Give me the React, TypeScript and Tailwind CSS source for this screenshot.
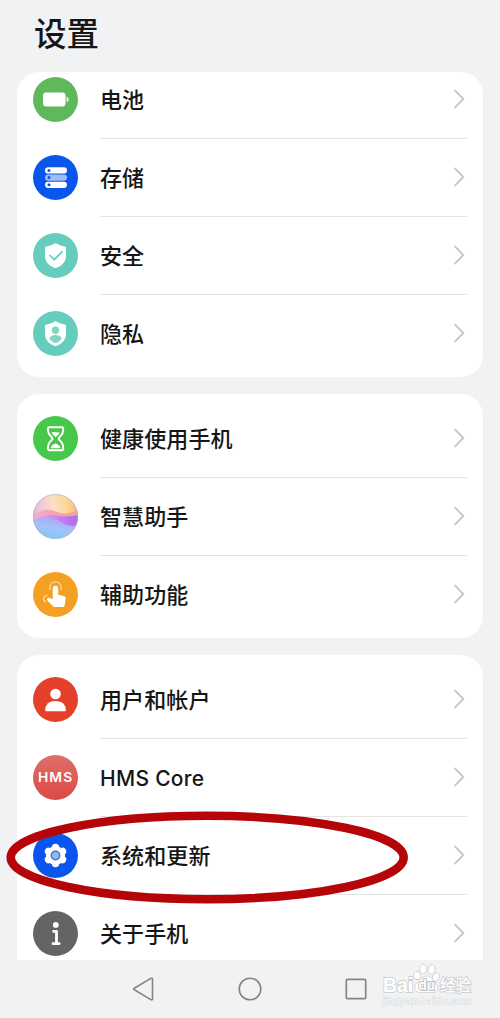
import React from "react";

interface RowProps {
  icon: React.ReactNode;
  label: string;
  latin?: boolean;
  last?: boolean;
}

const Disc = ({
  className,
  children,
}: {
  className: string;
  children?: React.ReactNode;
}) => (
  <div className={`w-[45px] h-[45px] shrink-0 rounded-full overflow-hidden ${className}`}>
    <svg viewBox="0 0 45 45" className="w-full h-full" fill="none">
      {children}
    </svg>
  </div>
);

const SHIELD =
  "M22.500 10c2.900 2 6 3.100 9.300 3.400.8.100 1.200.5 1.200 1.300v8.300c0 6-4 9.800-10.500 12.300C16 32.800 12 29 12 23v-8.300c0-.8.4-1.200 1.200-1.300 3.300-.3 6.400-1.400 9.300-3.400z";

const BatteryIcon = () => (
  <Disc className="bg-[#5fb95b]">
    <rect x="10" y="15.500" width="22.500" height="14" rx="3.200" fill="#fff" />
    <path d="M33.600 19.700v5.600c1.500-.3 2-1.200 2-2.800s-.5-2.500-2-2.800z" fill="#e4f5e3" />
  </Disc>
);

const StorageIcon = () => (
  <Disc className="bg-[#0a56ec]">
    <rect x="12" y="12.300" width="22" height="6.200" rx="3.100" fill="#fff" />
    <rect x="12" y="19.500" width="22" height="6.200" rx="3.100" fill="#9dbdfa" />
    <rect x="12" y="26.700" width="22" height="6.200" rx="3.100" fill="#fff" />
    <circle cx="16" cy="15.400" r="1.500" fill="#0a56ec" />
    <circle cx="16" cy="22.600" r="1.500" fill="#0a56ec" />
    <circle cx="16" cy="29.800" r="1.500" fill="#0a56ec" />
  </Disc>
);

const SecurityIcon = () => (
  <Disc className="bg-[#64cdbb]">
    <path d={SHIELD} fill="#fff" />
    <path
      d="M17 22.500l4.200 4.200 7.800-7.800"
      stroke="#64cdbb"
      strokeWidth="1.700"
      strokeLinecap="round"
      strokeLinejoin="round"
    />
  </Disc>
);

const PrivacyIcon = () => (
  <Disc className="bg-[#64cdbb]">
    <path d={SHIELD} fill="#fff" />
    <circle cx="22.500" cy="19.300" r="3.700" fill="#7fd5c6" />
    <path
      d="M16.300 27.500c.6-2.300 3-3.500 6.200-3.500s5.600 1.200 6.200 3.500c-1.200 2.200-3.400 3.700-6.200 4.800-2.800-1.100-5-2.600-6.200-4.800z"
      fill="#7fd5c6"
    />
  </Disc>
);

const HourglassIcon = () => (
  <Disc className="bg-[#47c84a]">
    <path
      d="M16.300 11.300h12.600q1.400 0 1.400 1.500c0 3.500-.9 5.800-3.200 7.600-1.900 1.500-1.900 2.900 0 4.300 2.300 1.800 3.200 4.400 3.200 8q0 1.500-1.400 1.500H16.300q-1.400 0-1.400-1.500c0-3.600.9-6.200 3.200-8 1.900-1.400 1.900-2.800 0-4.300-2.300-1.800-3.200-4.100-3.200-7.600q0-1.500 1.400-1.500z"
      stroke="#fff"
      strokeWidth="1.900"
      strokeLinejoin="round"
    />
    <path d="M18.600 16.300c2.600-1.200 5.200 1 8 0-.5 2.300-2.300 3.400-4 5-1.700-1.600-3.500-2.700-4-5z" fill="#fff" />
    <path d="M17.600 32.200c.4-2.700 2.500-3.700 5-4.700 2.500 1 4.600 2 5 4.700z" fill="#fff" />
  </Disc>
);

const AssistantIcon = () => (
  <Disc className="bg-[#8fc8fb]">
    <defs>
      <linearGradient id="sky" x1="0" y1="0.300" x2="1" y2="0.200">
        <stop offset="0" stopColor="#e9b8dd" />
        <stop offset="0.450" stopColor="#fbe0c4" />
        <stop offset="0.750" stopColor="#fbd795" />
        <stop offset="1" stopColor="#f5b38c" />
      </linearGradient>
      <linearGradient id="mid" x1="0" y1="0" x2="1" y2="0.300">
        <stop offset="0" stopColor="#efb0d6" />
        <stop offset="0.400" stopColor="#f4a3bd" />
        <stop offset="1" stopColor="#f4a392" />
      </linearGradient>
      <linearGradient id="violet" x1="0" y1="0" x2="1" y2="0">
        <stop offset="0" stopColor="#dfa6e4" />
        <stop offset="0.600" stopColor="#c67bea" />
        <stop offset="1" stopColor="#ab6bf0" />
      </linearGradient>
      <linearGradient id="sea" x1="0.800" y1="0" x2="0.400" y2="1">
        <stop offset="0" stopColor="#b79cf8" />
        <stop offset="0.550" stopColor="#a0c4fb" />
        <stop offset="1" stopColor="#7fc6fa" />
      </linearGradient>
    </defs>
    <rect width="45" height="45" fill="url(#sky)" />
    <path d="M0 20c5 0 8-4.500 14-4.500 8 0 11 4.500 18 4 5-.3 9-2 13-4v17H0z" fill="url(#mid)" />
    <path d="M6 24c6-3 10-3.500 17-2.500s14 1.500 22-.5v15H6z" fill="url(#violet)" />
    <path d="M0 25.500c6-1 10-2.500 16-2 8 .8 12 5.500 18 7.500 4 1.300 8 1 11 0v14H0z" fill="url(#sea)" />
    <circle cx="22.500" cy="22.500" r="22" stroke="#c9a9bd" strokeOpacity="0.600" strokeWidth="1" />
  </Disc>
);

const TouchIcon = () => (
  <Disc className="bg-[#f4a023]">
    <path
      d="M19.800 16.500a2.700 2.700 0 0 1 5.400 0v6.300l5.500 1.200c1.400.3 2.200 1.300 2 2.700l-1 6.200c-.2 1.400-1.200 2.200-2.500 2.200h-6.900c-1 0-1.800-.4-2.500-1.200l-5.400-5.400c-1.100-1.300.2-3.100 1.900-2.600l3.500 1z"
      fill="#fff"
    />
    <path d="M17.100 17.600a5.800 5.800 0 1 1 10.800 0" stroke="#fde1b4" strokeWidth="1.100" strokeLinecap="round" />
    <path d="M14.200 23.200c-4 .8-4.900 4.600-1.600 6.700" stroke="#fde1b4" strokeWidth="1.100" strokeLinecap="round" />
  </Disc>
);

const UserIcon = () => (
  <Disc className="bg-[#e5402a]">
    <circle cx="22.500" cy="17" r="5.300" fill="#fff" />
    <path d="M12.200 33.200c0-6 4.300-9.200 10.300-9.200s10.300 3.200 10.300 9.200c0 .6-.4 1-1 1H13.200c-.6 0-1-.4-1-1z" fill="#fff" />
  </Disc>
);

const HmsIcon = () => (
  <div className="w-[45px] h-[45px] shrink-0 rounded-full flex items-center justify-center bg-linear-to-b from-[#df6e68] to-[#dc4845]">
    <span className="font-['Inter'] font-semibold text-[13px] leading-none tracking-[1px] pl-px text-white scale-x-106">
      HMS
    </span>
  </div>
);

const GearIcon = () => (
  <Disc className="bg-[#0a56ec]">
    <g fill="#fff">
      <circle cx="22.500" cy="22.500" r="9.600" />
      {[0, 60, 120, 180, 240, 300].map((angle) => (
        <circle
          key={angle}
          cx="22.500"
          cy="14.400"
          r="3.700"
          transform={`rotate(${angle} 22.500 22.500)`}
        />
      ))}
    </g>
    <circle cx="22.500" cy="22.500" r="4.200" fill="#8fb8f4" stroke="#3f74cf" strokeWidth="1.500" />
  </Disc>
);

const InfoIcon = () => (
  <Disc className="bg-[#646464]">
    <circle cx="22.800" cy="13.900" r="2.900" fill="#fff" />
    <path
      d="M20.500 20.300h3v12M20 32.600h6.200"
      stroke="#fff"
      strokeWidth="2.800"
      strokeLinecap="round"
      strokeLinejoin="round"
    />
  </Disc>
);

const Row = ({ icon, label, latin, last }: RowProps) => (
  <div className="flex h-[78px] shrink-0 items-stretch pl-4 pr-4">
    <div className="flex items-center pb-px">{icon}</div>
    <div
      className={`ml-[22px] flex flex-1 items-center justify-between border-b ${
        last ? "border-transparent" : "border-[#e4e4e4]"
      }`}
    >
      <span
        className={
          latin
            ? "font-['Inter'] text-[21px] leading-8 font-medium tracking-[0.3px] pt-0.5"
            : "text-[22px] leading-8 font-medium pb-[3px] tracking-[0.1px]"
        }
      >
        {label}
      </span>
      <svg width="12" height="20" viewBox="0 0 12 20" fill="none" className="mr-0.5 mb-px">
        <path d="M2 1.500l8.300 8.500L2 18.500" stroke="#c8c8c8" strokeWidth="1.800" strokeLinecap="round" strokeLinejoin="round" />
      </svg>
    </div>
  </div>
);

const Watermark = () => (
  <svg width="96" height="46" viewBox="0 0 96 46" className="absolute right-[25px] bottom-[11px]">
    <g fill="#fff" stroke="#cfd0d2" strokeWidth="0.900">
      <ellipse cx="38" cy="14.500" rx="3.300" ry="4.300" transform="rotate(-20 38 14.500)" />
      <ellipse cx="44.300" cy="8" rx="3.500" ry="4.700" />
      <ellipse cx="52.500" cy="8.500" rx="3.500" ry="4.700" transform="rotate(10 52.500 8.500)" />
      <ellipse cx="57" cy="16" rx="3.300" ry="4.300" transform="rotate(20 57 16)" />
      <path d="M48 15c4.200 0 5.500 4.300 8.500 7 4 3.700 2.500 9.500-2 9.500H41c-5 0-7-5.500-3.500-9.200 3.200-3 5.500-7.300 10.500-7.300z" />
      <g className="font-['Liberation_Sans'] font-bold" paintOrder="stroke" strokeWidth="1.800">
        <text x="4" y="30.500" fontSize="20" textLength="30" lengthAdjust="spacingAndGlyphs">Bai</text>
        <text x="39.500" y="29" fontSize="14" textLength="16.500" lengthAdjust="spacingAndGlyphs" stroke="#b9babc">du</text>
      </g>
      <text x="61" y="29.500" fontSize="15.500" textLength="31" className="font-['Noto_Sans_CJK_SC'] font-medium" paintOrder="stroke" strokeWidth="1.800">
        经验
      </text>
    </g>
    <text
      x="4"
      y="43"
      fontSize="8.800"
      textLength="88"
      lengthAdjust="spacingAndGlyphs"
      fill="#fafafa"
      stroke="#dcdddf"
      strokeWidth="1.200"
      paintOrder="stroke"
      className="font-['Liberation_Sans']"
    >
      jingyan.baidu.com
    </text>
  </svg>
);

const NavBar = () => (
  <div className="relative h-[58px] shrink-0">
    <div className="flex h-full items-center justify-between pl-[132px] pr-[133px]">
      <svg width="22" height="26" viewBox="0 0 22 26" fill="none" stroke="#858585" strokeWidth="1.600" strokeLinejoin="round">
        <path d="M2.300 12.200 18.800 2.400q1.700-.8 1.700 1v19.200q0 1.800-1.700 1L2.300 13.800q-1.300-.8 0-1.600z" />
      </svg>
      <svg width="26" height="26" viewBox="0 0 26 26" fill="none" stroke="#858585" strokeWidth="1.600">
        <circle cx="13" cy="13" r="10.800" />
      </svg>
      <svg width="22" height="22" viewBox="0 0 22 22" fill="none" stroke="#858585" strokeWidth="1.700">
        <rect x="1.300" y="1.300" width="19.400" height="19.400" rx="1.200" />
      </svg>
    </div>
    <Watermark />
  </div>
);

const App = () => {
  return (
    <div className="relative flex h-[1018px] w-[500px] flex-col overflow-hidden bg-[#f1f2f4] font-['Noto_Sans_CJK_SC',sans-serif] text-[#161616]">
      <h1 className="h-[72px] shrink-0 pl-[34px] pt-[7px] text-[32.5px] leading-[50px] font-medium">设置</h1>
      <main className="flex h-[888px] shrink-0 flex-col gap-[17px] overflow-hidden px-[17px]">
        <section className="flex h-[305px] shrink-0 flex-col justify-end overflow-hidden rounded-[22px] bg-white pb-1">
          <Row icon={<BatteryIcon />} label="电池" />
          <Row icon={<StorageIcon />} label="存储" />
          <Row icon={<SecurityIcon />} label="安全" />
          <Row icon={<PrivacyIcon />} label="隐私" last />
        </section>
        <section className="shrink-0 rounded-[22px] bg-white pt-1.5 pb-1">
          <Row icon={<HourglassIcon />} label="健康使用手机" />
          <Row icon={<AssistantIcon />} label="智慧助手" />
          <Row icon={<TouchIcon />} label="辅助功能" last />
        </section>
        <section className="shrink-0 rounded-t-[22px] bg-white pt-1.5">
          <Row icon={<UserIcon />} label="用户和帐户" />
          <Row icon={<HmsIcon />} label="HMS Core" latin />
          <Row icon={<GearIcon />} label="系统和更新" />
          <Row icon={<InfoIcon />} label="关于手机" last />
        </section>
      </main>
      <NavBar />
      <svg width="406" height="100" viewBox="0 0 406 100" fill="none" className="pointer-events-none absolute left-1 top-[808px]">
        <ellipse cx="203.200" cy="49.500" rx="196.500" ry="41.700" stroke="#b50509" strokeWidth="8.500" />
      </svg>
    </div>
  );
};

export default App;
